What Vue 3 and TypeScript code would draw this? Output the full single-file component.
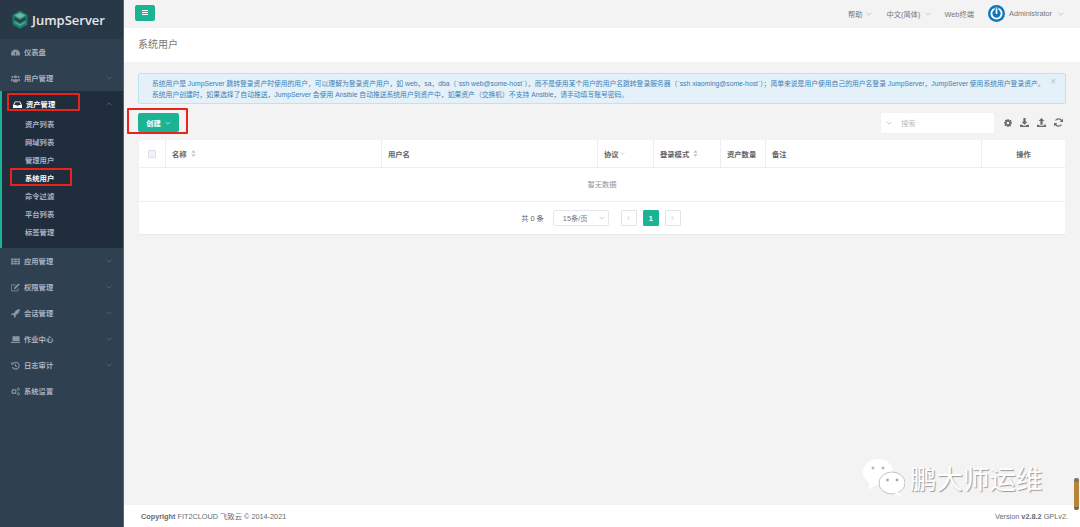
<template>
  <div class="app">
    <aside class="sidebar">
      <div class="logo">
        <svg class="logo-mark" viewBox="0 0 16 20" width="16" height="20">
          <path d="M8 0.500 15.500 4.700 15.500 14.500 8 19 0.500 14.500 0.500 4.700Z" fill="#1c7a68" />
          <path d="M8 2.500 13.500 5.600 8 8.800 2.500 5.600Z" fill="#6fb3a4" />
          <path d="M2.500 7.400 8 10.600 13.500 7.400 13.500 9.400 8 12.600 2.500 9.400Z" fill="#293846" />
          <path d="M2.500 11 8 14.200 13.500 11 13.500 13 8 16.500 2.500 13Z" fill="#4fa08f" />
        </svg>
        <span class="logo-text">JumpServer</span>
      </div>
      <nav class="menu">
        <template v-for="item in menu" :key="item.label">
          <div class="group" :class="{ open: item.children }">
            <div class="menu-item">
              <svg class="menu-icon" viewBox="0 0 12 12" width="9" height="9" v-html="item.icon"></svg>
              <span class="menu-label">{{ item.label }}</span>
              <svg v-if="item.arrow" class="menu-arrow" viewBox="0 0 10 6" width="6" height="4">
                <path :d="item.children ? 'M1 5 5 1 9 5' : 'M1 1 5 5 9 1'" fill="none" stroke="currentColor" stroke-width="1" />
              </svg>
            </div>
            <div v-if="item.children" class="submenu">
              <div v-for="sub in item.children" :key="sub" class="sub-item" :class="{ current: sub === '系统用户' }">{{ sub }}</div>
            </div>
          </div>
        </template>
      </nav>
    </aside>

    <main class="main">
      <header class="topbar">
        <button class="burger">
          <span></span><span></span><span></span>
        </button>
        <div class="top-links">
          <span class="top-link">帮助<svg class="chev" viewBox="0 0 10 6"><path d="M1 1 5 5 9 1" /></svg></span>
          <span class="top-link">中文(简体)<svg class="chev" viewBox="0 0 10 6"><path d="M1 1 5 5 9 1" /></svg></span>
          <span class="top-link">Web终端</span>
          <span class="top-link user">
            <svg class="avatar" viewBox="0 0 18 18" width="17" height="17">
              <circle cx="9" cy="9" r="9" fill="#1177bb" />
              <circle cx="9" cy="9" r="5.400" fill="none" stroke="#fff" stroke-width="2" />
              <path d="M9 3v6.500" stroke="#1177bb" stroke-width="4" />
              <path d="M9 3.500v6" stroke="#fff" stroke-width="1.800" />
            </svg>
            Administrator<svg class="chev far" viewBox="0 0 10 6"><path d="M1 1 5 5 9 1" /></svg>
          </span>
        </div>
      </header>

      <div class="page-heading">系统用户</div>

      <section class="content">
        <div class="alert">
          <p>系统用户是 JumpServer 跳转登录资产时使用的用户，可以理解为登录资产用户，如 web，sa，dba（`ssh web@some-host`），而不是使用某个用户的用户名跳转登录服务器（`ssh xiaoming@some-host`）；简单来说是用户使用自己的用户名登录 JumpServer，JumpServer 使用系统用户登录资产。</p>
          <p>系统用户创建时，如果选择了自动推送，JumpServer 会使用 Ansible 自动推送系统用户到资产中，如果资产（交换机）不支持 Ansible，请手动填写账号密码。</p>
          <span class="alert-close">×</span>
        </div>

        <div class="toolbar">
          <button class="create-btn">创建<svg class="chev white" viewBox="0 0 10 6"><path d="M1 1 5 5 9 1" /></svg></button>
          <div class="tools">
            <div class="search">
              <svg class="chev" viewBox="0 0 10 6"><path d="M1 1 5 5 9 1" /></svg>
              <span>搜索</span>
            </div>
            <div class="tool-icons">
              <svg viewBox="0 0 12 12" width="8" height="8"><path fill-rule="evenodd" d="M5 0h2l.3 1.600 1.200.5L9.900 1.200l1.400 1.400-.9 1.400.5 1.200L12 5v2l-1.600.3-.5 1.200.9 1.400-1.400 1.400-1.400-.9-1.200.5L7 12H5l-.3-1.600-1.200-.5-1.400.9L.7 9.400l.9-1.400-.5-1.200L0 7V5l1.600-.3.5-1.200-.9-1.400L2.600 .7l1.400.9 1.200-.5ZM6 4a2 2 0 1 0 0 4 2 2 0 0 0 0-4Z" /></svg>
              <svg viewBox="0 0 12 12" width="9" height="9"><path d="M4.500 0h3v5H10L6 9 2 5h2.500ZM0 9h3l1.500 1.300h3L9 9h3v3H0Z" /></svg>
              <svg viewBox="0 0 12 12" width="9" height="9"><path d="M6 0l4 4H7.500v5h-3V4H2ZM0 9h3v1.300h6V9h3v3H0Z" /></svg>
              <svg viewBox="0 0 12 12" width="9" height="9"><path fill="none" stroke="#6b6b6b" stroke-width="1.600" d="M10.400 4.400A4.700 4.700 0 0 0 2 3.400M1.600 7.600A4.700 4.700 0 0 0 10 8.600" /><path d="M12 1v4.400H7.600ZM0 11V6.600h4.400Z" /></svg>
            </div>
          </div>
        </div>

        <div class="table-card">
          <div class="thead">
            <div class="th check"><span class="checkbox"></span></div>
            <div v-for="col in columns" :key="col.label" class="th" :class="{ center: col.center }">
              {{ col.label }}
              <svg v-if="col.sort" class="sort" viewBox="0 0 6 10" width="5" height="7"><path d="M3 0 6 4H0ZM3 10 0 6h6Z" /></svg>
              <svg v-if="col.filter" class="chev tiny" viewBox="0 0 10 6"><path d="M1 1 5 5 9 1" /></svg>
            </div>
          </div>
          <div class="empty">暂无数据</div>
          <div class="pager">
            <span class="total">共 0 条</span>
            <div class="page-size">15条/页<svg class="chev" viewBox="0 0 10 6"><path d="M1 1 5 5 9 1" /></svg></div>
            <div class="pages">
              <span class="page-btn"><svg class="chev side" viewBox="0 0 6 10"><path d="M5 1 1 5 5 9" /></svg></span>
              <span class="page-btn on">1</span>
              <span class="page-btn"><svg class="chev side" viewBox="0 0 6 10"><path d="M1 1 5 5 1 9" /></svg></span>
            </div>
          </div>
        </div>
      </section>

      <footer class="footer">
        <span><b>Copyright</b> FIT2CLOUD 飞致云 © 2014-2021</span>
        <span>Version <b>v2.8.2</b> GPLv2.</span>
      </footer>
    </main>

    <!-- red marks drawn over the screenshot -->
    <div class="mark mark-group"></div>
    <div class="mark mark-sub"></div>
    <div class="mark mark-create"></div>

    <div class="watermark">
      <svg viewBox="0 0 42 37" width="42" height="37">
        <ellipse cx="15" cy="13" rx="15" ry="13" fill="#fff" />
        <path d="M6 22 6 31 14 25Z" fill="#fff" />
        <ellipse cx="29" cy="24" rx="13" ry="11" fill="#fff" stroke="#c4c4c4" stroke-width="1" />
        <path d="M35 33 39 37 31 35Z" fill="#fff" />
        <circle cx="10" cy="9" r="1.500" fill="#bbb" />
        <circle cx="20" cy="9" r="1.500" fill="#bbb" />
        <circle cx="24.500" cy="21" r="1.400" fill="#aaa" />
        <circle cx="34" cy="21" r="1.400" fill="#aaa" />
      </svg>
      <span>鹏大师运维</span>
    </div>
    <div class="scroll-thumb"></div>
  </div>
</template>

<script setup lang="ts">
interface MenuItem {
  label: string
  icon: string
  arrow?: boolean
  children?: string[]
}

interface Column {
  label: string
  sort?: boolean
  filter?: boolean
  center?: boolean
}

const menu: MenuItem[] = [
  { label: '仪表盘', icon: '<path fill="currentColor" fill-rule="evenodd" d="M6 2a6 6 0 0 0-6 6c0 1 .3 1.700.7 2h10.600c.4-.3.7-1 .7-2a6 6 0 0 0-6-6Zm.8 6.500-.8.500-.8-.5.5-3.500h.6Z"/>' },
  { label: '用户管理', arrow: true, icon: '<path fill="currentColor" d="M6 1.500a2 2 0 1 1 0 4 2 2 0 0 1 0-4ZM2 2.500a1.500 1.500 0 1 1 0 3 1.500 1.500 0 0 1 0-3ZM10 2.500a1.500 1.500 0 1 1 0 3 1.500 1.500 0 0 1 0-3ZM3 7h6v4H3ZM0 6.500h2.200v3H0ZM9.800 6.500H12v3H9.800Z"/>' },
  {
    label: '资产管理',
    arrow: true,
    icon: '<path fill="currentColor" fill-rule="evenodd" d="M2.500 2h7L12 7v3.500H0V7Zm.7 1L1.500 6.500h3l.7 1.200h1.600l.7-1.200h3L8.800 3Z"/>',
    children: ['资产列表', '网域列表', '管理用户', '系统用户', '命令过滤', '平台列表', '标签管理'],
  },
  { label: '应用管理', arrow: true, icon: '<path fill="currentColor" d="M0 2h3.500v2.200H0ZM4.200 2h3.600v2.200H4.200ZM8.500 2H12v2.200H8.500ZM0 4.900h3.500v2.200H0ZM4.200 4.900h3.600v2.200H4.200ZM8.500 4.900H12v2.200H8.500ZM0 7.800h3.500V10H0ZM4.200 7.800h3.600V10H4.200ZM8.500 7.800H12V10H8.500Z"/>' },
  { label: '权限管理', arrow: true, icon: '<path fill="none" stroke="currentColor" d="M9.500 7v3.500h-9v-8H6"/><path fill="currentColor" d="M10 .5 11.700 2 6 7.700 3.800 8.200 4.300 6Z"/>' },
  { label: '会话管理', arrow: true, icon: '<path fill="currentColor" d="M12 0C8 .5 5.500 2.500 4 5.500L1 6l-1 2 2.500-.3L4.300 9.500 4 12l2-1 .5-3C9.500 6.500 11.500 4 12 0Z"/>' },
  { label: '作业中心', arrow: true, icon: '<path fill="currentColor" d="M2 1.500h9.500v6.500H2ZM0 9h12v1.500H0Z"/>' },
  { label: '日志审计', arrow: true, icon: '<path fill="none" stroke="currentColor" stroke-width="1.400" d="M2.500 3.500A4.600 4.600 0 1 1 2 8M6 3.500V6.500L8 7.500"/><path fill="currentColor" d="M0.500 1 4 4.500 0.500 5Z"/>' },
  { label: '系统设置', icon: '<circle cx="4" cy="6" r="2.600" fill="none" stroke="currentColor" stroke-width="1.600"/><circle cx="9.800" cy="3" r="1.500" fill="none" stroke="currentColor" stroke-width="1.200"/><circle cx="9.800" cy="9.200" r="1.500" fill="none" stroke="currentColor" stroke-width="1.200"/>' },
]

const columns: Column[] = [
  { label: '名称', sort: true },
  { label: '用户名' },
  { label: '协议', filter: true },
  { label: '登录模式', sort: true },
  { label: '资产数量' },
  { label: '备注' },
  { label: '操作', center: true },
]
</script>

<style>
html,
body {
  margin: 0;
  height: 100%;
  overflow: hidden;
}
</style>

<style scoped>
.app {
  position: relative;
  display: flex;
  width: 1080px;
  height: 527px;
  overflow: hidden;
  background: #f3f3f4;
  font-family: "Liberation Sans", "Noto Sans CJK SC", sans-serif;
  font-size: 7.300px;
  color: #676a6c;
}

.sidebar {
  flex: 0 0 123px;
  background: #2f4050;
  border-right: 1px solid #59636e;
}

.logo {
  display: flex;
  align-items: center;
  gap: 4px;
  height: 39px;
  padding-left: 12px;
  background: #293846;
}

.logo-text {
  font-family: "Open Sans", "Liberation Sans", sans-serif;
  font-size: 13px;
  font-weight: 600;
  color: #e4e8ea;
}

.menu {
  display: flex;
  flex-direction: column;
}

.group.open {
  background: #1f2d3d;
  border-left: 2px solid #1ab394;
  padding-bottom: 6px;
}

.menu-item {
  display: flex;
  align-items: center;
  height: 26px;
  padding: 0 11px;
  color: #a7b1c2;
  font-weight: 600;
}

.group.open .menu-item {
  color: #fff;
}

.menu-icon {
  margin-right: 4px;
  flex: none;
  color: #8b96a5;
}

.group.open .menu-icon {
  color: #fff;
}

.menu-label {
  flex: 1;
}

.menu-arrow {
  color: #6d7b8a;
}

.submenu {
  display: flex;
  flex-direction: column;
  margin-top: -1px;
}

.sub-item {
  height: 18px;
  line-height: 18px;
  padding-left: 23px;
  color: #a7b1c2;
  font-weight: 600;
}

.sub-item.current {
  color: #fff;
}

.main {
  flex: 1;
  display: flex;
  flex-direction: column;
  min-width: 0;
}

.topbar {
  display: flex;
  align-items: center;
  justify-content: space-between;
  height: 28px;
  padding: 0 16px 0 11px;
}

.burger {
  display: flex;
  flex-direction: column;
  align-items: center;
  justify-content: center;
  gap: 1px;
  width: 20px;
  height: 16px;
  margin-top: -3px;
  padding: 0;
  border: none;
  border-radius: 2px;
  background: #1ab394;
}

.burger span {
  display: block;
  width: 6px;
  height: 1px;
  background: #fff;
}

.top-links {
  display: flex;
  align-items: center;
  gap: 14px;
  margin-top: -1px;
}

.top-link {
  display: flex;
  align-items: center;
  color: #777;
}

.avatar {
  margin-right: 4px;
}

.chev {
  width: 6px;
  height: 4px;
  margin-left: 4px;
  fill: none;
  stroke: #a9a9a9;
  stroke-width: 1;
}

.chev.far {
  margin-left: 6px;
}

.chev.white {
  stroke: #fff;
}

.chev.tiny {
  width: 5px;
  height: 3px;
  margin-left: 1px;
}

.chev.side {
  width: 3px;
  height: 6px;
  margin: 0;
}

.page-heading {
  height: 34px;
  line-height: 33px;
  padding-left: 14px;
  background: #fff;
  font-size: 10px;
  color: #777;
}

.content {
  flex: 1;
  padding: 11px 14px 0;
}

.alert {
  position: relative;
  box-sizing: border-box;
  height: 31px;
  padding: 5px 13px;
  background: #e4f1f8;
  border: 1px solid #bde3f0;
  border-radius: 2px;
  line-height: 10.500px;
  font-size: 6.800px;
  color: #3d7eb5;
  white-space: nowrap;
}

.alert p {
  margin: 0;
}

.alert-close {
  position: absolute;
  right: 9px;
  top: 3px;
  font-size: 10px;
  color: #b8c6cf;
}

.toolbar {
  display: flex;
  align-items: center;
  justify-content: space-between;
  height: 19px;
  margin-top: 9px;
}

.create-btn {
  display: flex;
  align-items: center;
  justify-content: center;
  width: 41px;
  height: 19px;
  padding: 0;
  border: none;
  border-radius: 2px;
  background: #1ab394;
  color: #fff;
  font: inherit;
  font-weight: 600;
}

.tools {
  display: flex;
  align-items: center;
}

.search {
  display: flex;
  align-items: center;
  box-sizing: border-box;
  width: 113px;
  height: 20px;
  padding-left: 5px;
  background: #fff;
  color: #bbb;
}

.search .chev {
  margin: 0 9px 0 0;
}

.tool-icons {
  display: flex;
  align-items: center;
  gap: 8px;
  margin-left: 10px;
  padding-right: 3px;
  fill: #6b6b6b;
}

.table-card {
  margin: 8px 1px 0;
  background: #fff;
  border-bottom: 1px solid #e7eaec;
}

.thead {
  display: grid;
  grid-template-columns: 27px 216px 216px 56px 67px 45px 216px 1fr;
  height: 27px;
  border-bottom: 1px solid #ebeef5;
}

.th {
  display: flex;
  align-items: center;
  padding-left: 6px;
  border-right: 1px solid #ebeef5;
  font-weight: 700;
  color: #606266;
}

.th:last-child {
  border-right: none;
}

.th.check,
.th.center {
  justify-content: center;
  padding: 0;
}

.checkbox {
  display: block;
  box-sizing: border-box;
  width: 8px;
  height: 8px;
  background: #edf2fc;
  border: 1px solid #dcdfe6;
  border-radius: 1px;
}

.sort {
  margin-left: 4px;
  fill: #c0c4cc;
}

.empty {
  height: 33px;
  line-height: 33px;
  text-align: center;
  color: #909399;
  border-bottom: 1px solid #ebeef5;
}

.pager {
  display: flex;
  align-items: center;
  justify-content: center;
  height: 32px;
  padding-right: 2px;
}

.total {
  margin-right: 9px;
  color: #606266;
}

.page-size {
  display: flex;
  align-items: center;
  justify-content: space-between;
  box-sizing: border-box;
  width: 56px;
  height: 16px;
  padding: 0 3px 0 9px;
  border: 1px solid #e4e7ed;
  border-radius: 2px;
  color: #777;
}

.pages {
  display: flex;
  gap: 6px;
  margin-left: 12px;
}

.page-btn {
  display: flex;
  align-items: center;
  justify-content: center;
  box-sizing: border-box;
  width: 16px;
  height: 16px;
  border: 1px solid #e0e3e8;
  border-radius: 1px;
  font-weight: 700;
}

.page-btn.on {
  background: #1ab394;
  border-color: #1ab394;
  color: #fff;
}

.footer {
  display: flex;
  align-items: center;
  justify-content: space-between;
  height: 22px;
  padding: 0 12px 0 17px;
  background: #fff;
  font-size: 7.300px;
  color: #676a6c;
}

.mark {
  position: absolute;
  box-sizing: border-box;
  border: 2px solid #e8241c;
  border-radius: 1px;
}

.mark-group {
  left: 7px;
  top: 93px;
  width: 73px;
  height: 18px;
}

.mark-sub {
  left: 10px;
  top: 168px;
  width: 62px;
  height: 18px;
}

.mark-create {
  left: 127px;
  top: 108px;
  width: 61px;
  height: 26px;
}

.watermark {
  position: absolute;
  left: 863px;
  top: 459px;
  display: flex;
  align-items: center;
  gap: 5px;
  font-size: 26.500px;
  color: #fff;
  text-shadow: 1px 1px 1px #9a9a9a;
  font-family: "Noto Sans CJK SC", sans-serif;
  line-height: 37px;
}

.scroll-thumb {
  position: absolute;
  right: 1px;
  top: 478px;
  width: 5px;
  height: 32px;
  border-radius: 2px;
  background: linear-gradient(#7a7469 0 12%, #b8843c 12% 90%, #6f675c 90%);
}
</style>
